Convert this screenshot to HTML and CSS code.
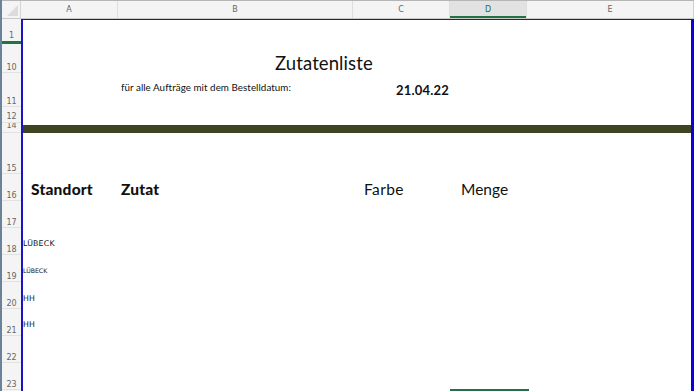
FILE: index.html
```
<!DOCTYPE html>
<html lang="de">
<head>
<meta charset="utf-8">
<title>Zutatenliste</title>
<link rel="stylesheet" href="styles.css">
</head>
<body>
<div class="app">
  <div class="colheads">
    <div class="corner"><span class="tri"></span></div>
    <div class="ch ch-a">A</div>
    <div class="ch ch-b">B</div>
    <div class="ch ch-c">C</div>
    <div class="ch ch-d sel">D</div>
    <div class="ch ch-e">E</div>
  </div>
  <div class="main">
    <div class="rowheads">
      <div class="rh r1 selrow">1</div>
      <div class="rh r10">10</div>
      <div class="rh r11">11</div>
      <div class="rh r12">12</div>
      <div class="rh r14"><span class="rh14">14</span></div>
      <div class="rh r15">15</div>
      <div class="rh r16">16</div>
      <div class="rh rn">17</div>
      <div class="rh rn">18</div>
      <div class="rh rn">19</div>
      <div class="rh rn">20</div>
      <div class="rh rn">21</div>
      <div class="rh rn">22</div>
      <div class="rh rn">23</div>
    </div>
    <div class="sheet">
      <div class="row r1"></div>
      <div class="row r10"><div class="title">Zutatenliste</div></div>
      <div class="row r11">
        <div class="c-a"></div>
        <div class="c-b"><span class="subtitle">für alle Aufträge mit dem Bestelldatum:</span></div>
        <div class="c-c"><span class="date">21.04.22</span></div>
      </div>
      <div class="row r12"></div>
      <div class="row r14"><div class="band"></div></div>
      <div class="row r15"></div>
      <div class="row r16 heads">
        <div class="c-a"><span class="hb hb-standort">Standort</span></div>
        <div class="c-b"><span class="hb">Zutat</span></div>
        <div class="c-c"><span class="hn hn-farbe">Farbe</span></div>
        <div class="c-d"><span class="hn hn-menge">Menge</span></div>
      </div>
      <div class="row rn"></div>
      <div class="row rn"><span class="loc">LÜBECK</span></div>
      <div class="row rn"><span class="loc loc-sm">LÜBECK</span></div>
      <div class="row rn"><span class="loc loc-hh">HH</span></div>
      <div class="row rn"><span class="loc loc-hh2">HH</span></div>
      <div class="row rn"></div>
      <div class="row rn last"><div class="c-a"></div><div class="c-b"></div><div class="c-c"></div><div class="c-d selcell"></div></div>
    </div>
  </div>
</div>
</body>
</html>
```
FILE: styles.css
```
* { box-sizing: border-box; margin: 0; padding: 0; }
html, body { width: 694px; height: 391px; overflow: hidden; background: #fff; }
body { font-family: "Lato", "DejaVu Sans", sans-serif; color: #111; }

.app { width: 694px; height: 391px; display: flex; flex-direction: column; border-left: 2px solid #6b8398; }

.colheads {
  height: 19px; display: flex; background: #f4f4f4;
  border-top: 1px solid #b5b5b5; border-bottom: 1px solid #c9c9c9;
  font-family: "DejaVu Sans", sans-serif; font-size: 8px; color: #666;
}
.corner { width: 19px; border-right: 1px solid #d4d4d4; position: relative; }
.tri { position: absolute; right: 2px; bottom: 2px; width: 0; height: 0;
  border-left: 11px solid transparent; border-bottom: 11px solid #dcdcdc; }
.ch { display: flex; align-items: center; justify-content: center; border-right: 1px solid #dedede; }
.ch-a { width: 97px; }
.ch-b { width: 235px; }
.ch-c { width: 97px; }
.ch-d { width: 77px; }
.ch-e { flex: 1; border-right: 1px solid #cfcfcf; }
.ch.sel { color: #217346; background: #e2e2e2; box-shadow: inset 0 -2px 0 #217346; }

.main { flex: 1; display: flex; }
.rowheads { width: 19px; background: #f4f4f4; display: flex; flex-direction: column;
  font-family: "DejaVu Sans", sans-serif; font-size: 8px; color: #666; }
.rh { display: flex; align-items: flex-end; justify-content: center; padding-bottom: 0;
  border-bottom: 1px solid #e2e2e2; overflow: hidden; line-height: 9px; }
.rh.selrow { box-shadow: inset 0 -2px 0 #217346; border-bottom-color: #217346; padding-bottom: 3px; }
.rh.r12 { padding-bottom: 1px; }
.rh.r14 { align-items: flex-start; padding: 0; }
.rh14 { display: block; line-height: 8px; margin-top: -1px; }

.r1 { height: 25px; }
.r10 { height: 29px; }
.r11 { height: 34px; }
.r12 { height: 16px; }
.r14 { height: 10px; }
.r15 { height: 41px; }
.r16 { height: 27px; }
.rn { height: 27px; }

.sheet { flex: 1; display: flex; flex-direction: column;
  border-left: 2px solid #1a14c8; border-top: 1px solid #1a14c8; border-right: 3px solid #0b00d6; }
.sheet .r1 { height: 24px; }
.row { display: flex; }

.c-a { width: 96px; flex: none; }
.c-b { width: 235px; flex: none; }
.c-c { width: 97px; flex: none; }
.c-d { width: 77px; flex: none; }

.title { padding: 8px 0 0 252px; font-size: 18.5px; letter-spacing: 0.1px; color: #111; }

.subtitle { display: block; padding: 8px 0 0 2px; font-size: 9.8px; letter-spacing: 0.05px; color: #111; }
.date { display: block; padding: 9px 0 0 42px; font-size: 13px; font-weight: 700; letter-spacing: 0.2px; color: #111; }

.r14 .band { margin-top: 2px; height: 8px; width: 100%; background: #3e4421; }

.heads > div { padding-top: 6px; }
.hb { display: block; font-size: 15.5px; font-weight: 900; padding-left: 2px; letter-spacing: 0.2px; color: #111; }
.hb-standort { padding-left: 8px; }
.hn { display: block; font-size: 15.5px; color: #111; padding-left: 10px; letter-spacing: 0.4px; }
.hn-menge { padding-left: 10px; letter-spacing: 0; }

.loc { font-family: "DejaVu Sans", sans-serif; font-size: 7.8px; padding: 11px 0 0 0; color: #111; letter-spacing: 0.2px; }
.loc-sm { font-size: 6.2px; padding-top: 12px; letter-spacing: 0; }
.loc-hh { padding-top: 12px; }
.loc-hh2 { padding-top: 11px; }

.selcell { margin-top: 26px; height: 2px; background: #217346; margin-left: -1px; width: 79px; }
```
